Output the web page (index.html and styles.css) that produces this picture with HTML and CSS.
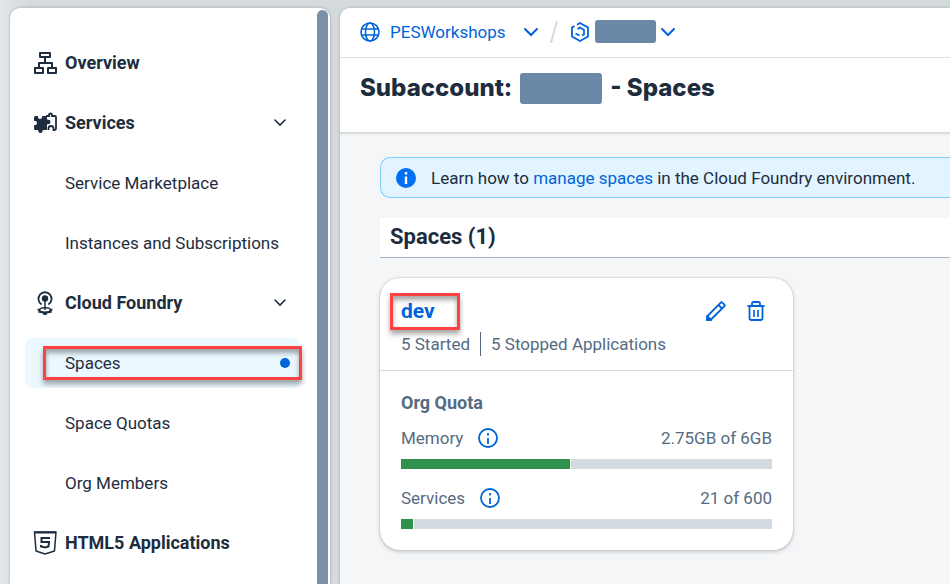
FILE: index.html
```html
<!DOCTYPE html>
<html lang="en">
<head>
<meta charset="utf-8">
<meta name="viewport" content="width=device-width, initial-scale=1">
<title>Subaccount - Spaces</title>
<link rel="stylesheet" href="styles.css">
</head>
<body>
<div class="shell">
  <nav class="sidebar" aria-label="Subaccount">
    <ul class="nav-list">
      <li><a class="nav-item group" href="#overview">
        <svg class="nav-icon" viewBox="0 0 24 24" fill="none" stroke="currentColor" stroke-width="2" stroke-linejoin="round" aria-hidden="true"><rect x="7" y="2" width="10" height="4"/><rect x="2" y="17" width="8" height="5"/><rect x="15" y="17" width="8" height="5"/><path d="M12 6v6M6 17v-5h13v5"/></svg>
        <span>Overview</span></a></li>
      <li><button class="nav-item group" type="button" aria-expanded="true">
        <svg class="nav-icon" viewBox="0 0 24 24" aria-hidden="true"><path fill="currentColor" d="M1 6.500Q1 5 2.500 5H4.500Q5 5 5 6Q4.800 8 7 8T9 6Q9 5 9.600 5H14V8Q14 9 15 8.800Q17.500 8.500 17.500 11T15 13.100Q14 13 14 14V19H10.500Q9.500 19 9.500 20Q9.700 22 7.500 22T5.300 20Q5.500 19 4.500 19H2.500Q1 19 1 17.500V14.800Q1 14 2 14Q4 14.200 4 12T2 10Q1 10.200 1 9.300Z"/><path fill="none" stroke="currentColor" stroke-width="1.800" d="M13 5H16V4Q16 2.500 17.500 2.500T19 4V5H22Q23 5 23 6V17.500Q23 19 21.500 19H20.500V17.500Q20.500 15 18 15T15.500 17.500V19"/></svg>
        <span>Services</span>
        <svg class="chevron" viewBox="0 0 14 14" aria-hidden="true"><path d="M2 4l5 5 5-5"/></svg></button>
        <ul class="nav-list nested">
          <li><a class="nav-item" href="#marketplace">Service Marketplace</a></li>
          <li><a class="nav-item" href="#instances">Instances and Subscriptions</a></li>
        </ul></li>
      <li><button class="nav-item group" type="button" aria-expanded="true">
        <svg class="nav-icon" viewBox="0 0 24 24" aria-hidden="true"><g fill="none" stroke="currentColor" stroke-width="1.800"><path d="M8.600 13.500A6.600 6.600 0 1 1 15.400 13.500"/><path d="M12 8v11" stroke-width="1.500"/><ellipse cx="12" cy="19" rx="5.500" ry="2.200" stroke-width="1.500"/></g><circle cx="12" cy="7.500" r="3.200" fill="currentColor"/><path fill="currentColor" d="M4.500 17.500L7 18.500Q8 21 12 21T17 18.500L19.500 17.500V19L18.500 20L19 21.500L16.500 22L14 22.500L13.500 24H10.500L10 22.500L7.500 22L5 21.500L5.500 20L4.500 19Z"/></svg>
        <span>Cloud Foundry</span>
        <svg class="chevron" viewBox="0 0 14 14" aria-hidden="true"><path d="M2 4l5 5 5-5"/></svg></button>
        <ul class="nav-list nested">
          <li><a class="nav-item selected" href="#spaces" aria-current="page">Spaces<span class="dot"></span><span class="marker marker-nav"></span></a></li>
          <li><a class="nav-item" href="#quotas">Space Quotas</a></li>
          <li><a class="nav-item" href="#members">Org Members</a></li>
        </ul></li>
      <li><a class="nav-item group" href="#html5">
        <svg class="nav-icon" viewBox="0 0 24 24" fill="none" stroke="currentColor" aria-hidden="true"><path stroke-width="1.500" stroke-linejoin="round" d="M1.500 1H23L21.500 20L12 23L3 20Z"/><path stroke-width="2" d="M1.500 1.500H23M17 7H8.500V11H16L15.500 15.500L12 16.500L8 15.500V14"/></svg>
        <span>HTML5 Applications</span></a></li>
    </ul>
    <div class="scroll-thumb"></div>
  </nav>

  <main class="page">
    <header class="page-header">
      <nav class="crumbs" aria-label="Breadcrumb">
        <a class="crumb" href="#global">
          <svg class="icon20" viewBox="0 0 20 20" fill="none" stroke="currentColor" stroke-width="1.600" aria-hidden="true"><circle cx="10" cy="10" r="9"/><ellipse cx="10" cy="10" rx="4.500" ry="9"/><path d="M1.500 7h17M1.500 13h17"/></svg>
          <span>PESWorkshops</span></a>
        <button class="crumb-menu first" type="button" aria-label="Switch global account"><svg class="chevron bold" viewBox="0 0 14 14" aria-hidden="true"><path d="M1 4l6 6 6-6"/></svg></button>
        <svg class="slash" viewBox="0 0 8 22" aria-hidden="true"><path d="M1 22L7 0"/></svg>
        <a class="crumb sub" href="#subaccount" aria-label="Subaccount">
          <svg class="icon20" viewBox="0 0 20 20" fill="none" stroke="currentColor" stroke-width="1.800" aria-hidden="true"><path d="M7 2.700L10 1L18 5.500V14.500L10 19L2 14.500V5.500L4.500 4.100"/><path d="M7.500 7L10 5.500L14 8V12.500L12 13.500M5.500 11.500L9.500 13.500"/></svg>
          <span class="redacted small"></span></a>
        <button class="crumb-menu" type="button" aria-label="Switch subaccount"><svg class="chevron bold" viewBox="0 0 14 14" aria-hidden="true"><path d="M1 4l6 6 6-6"/></svg></button>
      </nav>
      <h1 class="title"><span>Subaccount:</span><span class="redacted large"></span><span>- Spaces</span></h1>
    </header>

    <div class="content">
      <div class="message">
        <svg class="icon20" viewBox="0 0 20 20" aria-hidden="true"><circle cx="10" cy="10" r="10" fill="#0070f2"/><path stroke="#fff" stroke-width="2.400" d="M10 4v2.500M10 8.500v7.500"/></svg>
        <p>Learn how to <a href="#manage">manage spaces</a> in the Cloud Foundry environment.</p>
      </div>
      <h2 class="section-title">Spaces (1)</h2>

      <article class="card">
        <header class="card-header">
          <div class="card-top">
            <h3 class="space-name"><a href="#dev">dev</a><span class="marker marker-name"></span></h3>
            <div class="actions">
              <button type="button" aria-label="Edit space"><svg class="icon20" viewBox="0 0 20 20" fill="none" stroke="currentColor" stroke-width="1.800" stroke-linejoin="round" aria-hidden="true"><path d="M1 19L1.500 15L15 1.400Q15.700 1 16.300 1.600L18.600 3.900Q19 4.500 18.600 5L5 18.500Z"/><path d="M12.500 4L16 7.500"/><path d="M1 15L5 19H1Z" fill="currentColor"/></svg></button>
              <button type="button" aria-label="Delete space"><svg class="icon20" viewBox="0 0 20 20" fill="none" stroke="currentColor" stroke-width="1.800" aria-hidden="true"><path d="M1.500 5H18.500M6 5V2.500Q6 1 7.500 1H12.500Q14 1 14 2.500V5M3.500 5V17Q3.500 19 5.500 19H14.500Q16.500 19 16.500 17V5"/><path stroke-width="1.600" d="M8 9v7M12 9v7"/></svg></button>
            </div>
          </div>
          <p class="apps"><span>5 Started</span><span class="stopped">5 Stopped Applications</span></p>
        </header>
        <section class="quota">
          <h4>Org Quota</h4>
          <div class="metric">
            <span id="memory">Memory</span>
            <button type="button" aria-label="About memory"><svg class="icon20" viewBox="0 0 20 20" fill="none" stroke="currentColor" stroke-width="1.800" aria-hidden="true"><circle cx="10" cy="10" r="9"/><path d="M10 5v2.500M10 10v6"/></svg></button>
            <span class="value">2.75GB of 6GB</span>
          </div>
          <div class="bar" role="meter" aria-labelledby="memory" aria-valuemin="0" aria-valuemax="6" aria-valuenow="2.75"><span style="width:45.800%"></span></div>
          <div class="metric">
            <span id="services">Services</span>
            <button type="button" aria-label="About services"><svg class="icon20" viewBox="0 0 20 20" fill="none" stroke="currentColor" stroke-width="1.800" aria-hidden="true"><circle cx="10" cy="10" r="9"/><path d="M10 5v2.500M10 10v6"/></svg></button>
            <span class="value">21 of 600</span>
          </div>
          <div class="bar" role="meter" aria-labelledby="services" aria-valuemin="0" aria-valuemax="600" aria-valuenow="21"><span style="width:3.500%"></span></div>
        </section>
      </article>
    </div>
  </main>
</div>
</body>
</html>
```
FILE: styles.css
```css
* { box-sizing: border-box; }

body {
  margin: 0;
  background: #d5dadd;
  color: #1d2d3e;
  font: 17px/24px Roboto, "Liberation Sans", sans-serif;
}

h1, h2, h3, h4, p, ul { margin: 0; padding: 0; }
ul { list-style: none; }
a { color: #0064d9; text-decoration: none; }
button {
  padding: 0;
  border: 0;
  background: none;
  color: #0064d9;
  font: inherit;
  cursor: pointer;
}
svg { display: block; flex: none; }

.icon20 { width: 20px; height: 20px; }

.shell {
  display: flex;
  gap: 10px;
  height: 100vh;
  padding: 8px 0 0 10px;
  overflow: hidden;
  background: linear-gradient(90deg, #e3e7ea 0, #d5dadd 30px);
}

/* Side navigation */
.sidebar {
  display: flex;
  flex: none;
  justify-content: space-between;
  width: 320px;
  padding: 2px 2px 0 15px;
  overflow: hidden;
  border-radius: 10px 10px 0 0;
  background: #fff;
  box-shadow: 0 0 3px rgba(34, 53, 72, .35);
}
.sidebar > .nav-list { width: 275px; padding-top: 28px; }
.nav-list { display: flex; flex-direction: column; gap: 10px; }
.nested { margin-top: 10px; }
.nav-item {
  position: relative;
  display: flex;
  align-items: center;
  width: 100%;
  height: 50px;
  padding: 0 10px 0 40px;
  border-radius: 8px;
  color: #1d2d3e;
  text-align: left;
  white-space: nowrap;
}
.nav-item.group { gap: 8px; padding: 0 13px 0 8px; font-size: 18px; font-weight: 700; }
.nav-item.selected { background: #ebf8ff; }
.nav-icon { width: 24px; height: 24px; }
.chevron {
  width: 14px;
  height: 14px;
  margin-left: auto;
  fill: none;
  stroke: currentColor;
  stroke-width: 1.6;
  stroke-linecap: round;
}
.chevron.bold { stroke-width: 2; }
.dot {
  width: 10px;
  height: 10px;
  margin-left: auto;
  border-radius: 50%;
  background: #0064d9;
}
.scroll-thumb { width: 11px; border-radius: 6px 6px 0 0; background: #7b91a8; }

/* Callout outlines laid over the interface */
.marker {
  position: absolute;
  border: 3px solid #ff4141;
  box-shadow: 0 4px 5px rgba(0, 0, 0, .35), inset 0 4px 5px rgba(0, 0, 0, .35);
  pointer-events: none;
}
.marker-nav { inset: 8px -2px 8px 18px; }
.marker-name { inset: -6px -25px -7px -11px; }

/* Main page */
.page {
  flex: 1;
  min-width: 0;
  overflow: hidden;
  border-radius: 10px 0 0 0;
  background: #f5f6f7;
  box-shadow: 0 0 3px rgba(34, 53, 72, .3);
}
.page-header {
  background: #fff;
  border-bottom: 1px solid #d3d5d7;
  box-shadow: 0 1px 2px rgba(34, 53, 72, .15);
}
.crumbs {
  display: flex;
  align-items: center;
  height: 50px;
  padding: 0 20px 2px;
  border-bottom: 1px solid #e0e2e4;
}
.crumb { display: flex; align-items: center; gap: 10px; }
.crumb.sub { gap: 5px; margin-left: 12px; }
.crumb-menu { margin-left: 5px; }
.crumb-menu.first { margin-left: 18px; }
.slash { width: 8px; height: 22px; margin-left: 12px; fill: none; stroke: #d9d9d9; stroke-width: 2; }
.redacted { border-radius: 3px; background: #6b88a7; }
.redacted.small { width: 61px; height: 23px; }
.redacted.large { width: 82px; height: 31px; }
.title {
  display: flex;
  align-items: center;
  gap: 8px;
  height: 74px;
  padding: 0 20px 14px;
  font-family: Inter, Roboto, sans-serif;
  font-size: 24px;
  font-weight: 800;
  line-height: 32px;
}

.content { padding: 24px 0 0 40px; }
.message {
  display: flex;
  align-items: center;
  gap: 15px;
  height: 41px;
  padding: 0 15px;
  border: 1px solid #7bcfff;
  border-right: 0;
  border-radius: 10px 0 0 10px;
  background: #e1f4ff;
  white-space: nowrap;
}
.section-title {
  height: 40px;
  margin: 20px 0;
  padding: 0 10px;
  border-bottom: 1px solid #a8b3c5;
  background: #fff;
  font-size: 22px;
  font-weight: 700;
  line-height: 38px;
}

/* Space card */
.card {
  max-width: 413px;
  border-radius: 20px;
  background: #fff;
  box-shadow: 0 0 2px rgba(34, 53, 72, .3), 0 2px 4px rgba(34, 53, 72, .2);
  color: #556b82;
}
.card-header { padding: 21px 27px 14px 21px; border-bottom: 1px solid #d9d9d9; }
.card-top { display: flex; align-items: center; justify-content: space-between; }
.space-name { position: relative; font-size: 21px; font-weight: 700; }
.actions { display: flex; gap: 20px; }
.apps { display: flex; margin-top: 9px; }
.stopped { margin-left: 10px; padding-left: 10px; border-left: 1px solid #556b82; }
.quota { padding: 20px 21px 21px; }
.quota h4 { font-size: 18px; font-weight: 700; }
.metric { display: flex; align-items: center; gap: 15px; margin-top: 11px; }
.metric .value { margin-left: auto; }
.bar { height: 10px; margin-top: 9px; background: #d3dae1; }
.bar span {
  display: block;
  height: 100%;
  border-right: 1px solid #fff;
  background: #30914c;
}
.bar + .metric { margin-top: 17px; }
```
